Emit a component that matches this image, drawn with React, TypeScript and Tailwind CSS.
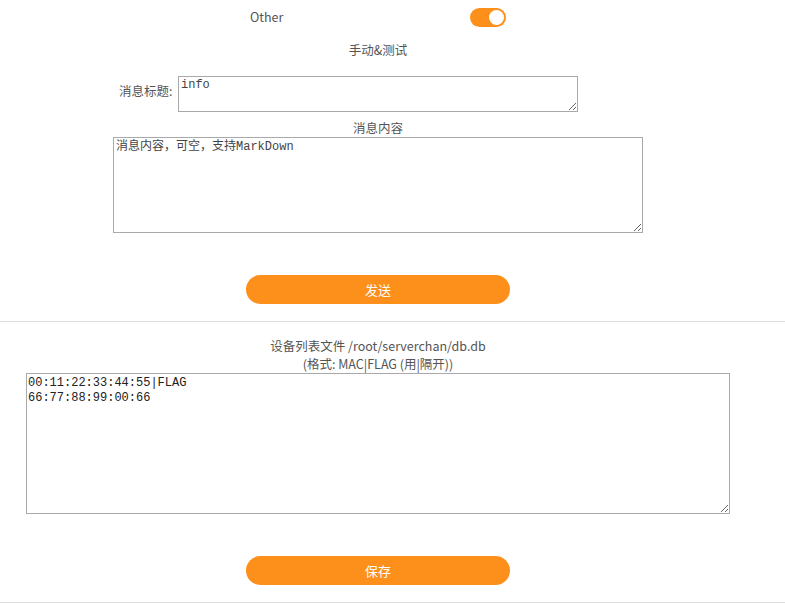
const uiFont = "font-['Noto_Sans_CJK_SC','Noto_Sans',sans-serif]";
const monoFont = "font-['Liberation_Mono','Noto_Sans_CJK_SC',monospace]";

function Toggle({ on }: { on: boolean }) {
  return (
    <button
      className={
        "relative h-[19px] w-[36px] rounded-full " +
        (on ? "bg-[#fd8f1b]" : "bg-[#ccc]")
      }
    >
      <span
        className={
          "absolute top-[2px] h-[15px] w-[15px] rounded-full bg-white " +
          (on ? "right-[2px]" : "left-[2px]")
        }
      />
    </button>
  );
}

function OrangeButton({ label }: { label: string }) {
  return (
    <button className="mx-auto block h-[29px] w-[264px] rounded-full bg-[#fd8f1b] text-[13px] text-white">
      {label}
    </button>
  );
}

export default function App() {
  return (
    <div className={"w-[785px] h-[603px] overflow-hidden bg-white text-[12.5px] text-[#555] " + uiFont}>
      <div className="w-[756px]">
        {/* 开关 */}
        <div className="flex h-[34px] items-center pl-[250px]">
          <span className="w-[220px]">Other</span>
          <Toggle on={true} />
        </div>

        <div className="mt-[7px] text-center leading-[18px]">手动&amp;测试</div>

        <div className="mt-[17px] flex items-start pl-[119px]">
          <label className="mt-[6px] w-[59px] whitespace-nowrap leading-[18px]">消息标题:</label>
          <textarea
            defaultValue="info"
            className={"h-[36px] w-[400px] border border-[#a9a9a9] px-[2px] py-[1px] text-[12px] leading-[15px] text-[#444] outline-none " + monoFont}
          />
        </div>

        <div className="mt-[7px] text-center leading-[18px]">消息内容</div>
        <textarea
          defaultValue="消息内容，可空，支持MarkDown"
          className={"mx-auto block h-[96px] w-[530px] border border-[#a9a9a9] px-[2px] py-[2px] text-[12px] leading-[15px] text-[#444] outline-none " + monoFont}
        />

        <div className="mt-[42px]">
          <OrangeButton label="发送" />
        </div>
      </div>

      <div className="mt-[17px] h-px w-full bg-[#ddd]" />

      <div className="w-[756px]">
        <div className="mt-[15px] text-center leading-[18px]">
          <div>设备列表文件 /root/serverchan/db.db</div>
          <div>(格式: MAC|FLAG (用|隔开))</div>
        </div>
        <textarea
          defaultValue={"00:11:22:33:44:55|FLAG\n66:77:88:99:00:66"}
          className={"mx-auto block h-[141px] w-[704px] border border-[#a9a9a9] px-[1px] py-[2px] text-[12px] leading-[15px] text-[#222] outline-none " + monoFont}
        />
        <div className="mt-[42px]">
          <OrangeButton label="保存" />
        </div>
      </div>

      <div className="mt-[17px] h-px w-full bg-[#ddd]" />
    </div>
  );
}
